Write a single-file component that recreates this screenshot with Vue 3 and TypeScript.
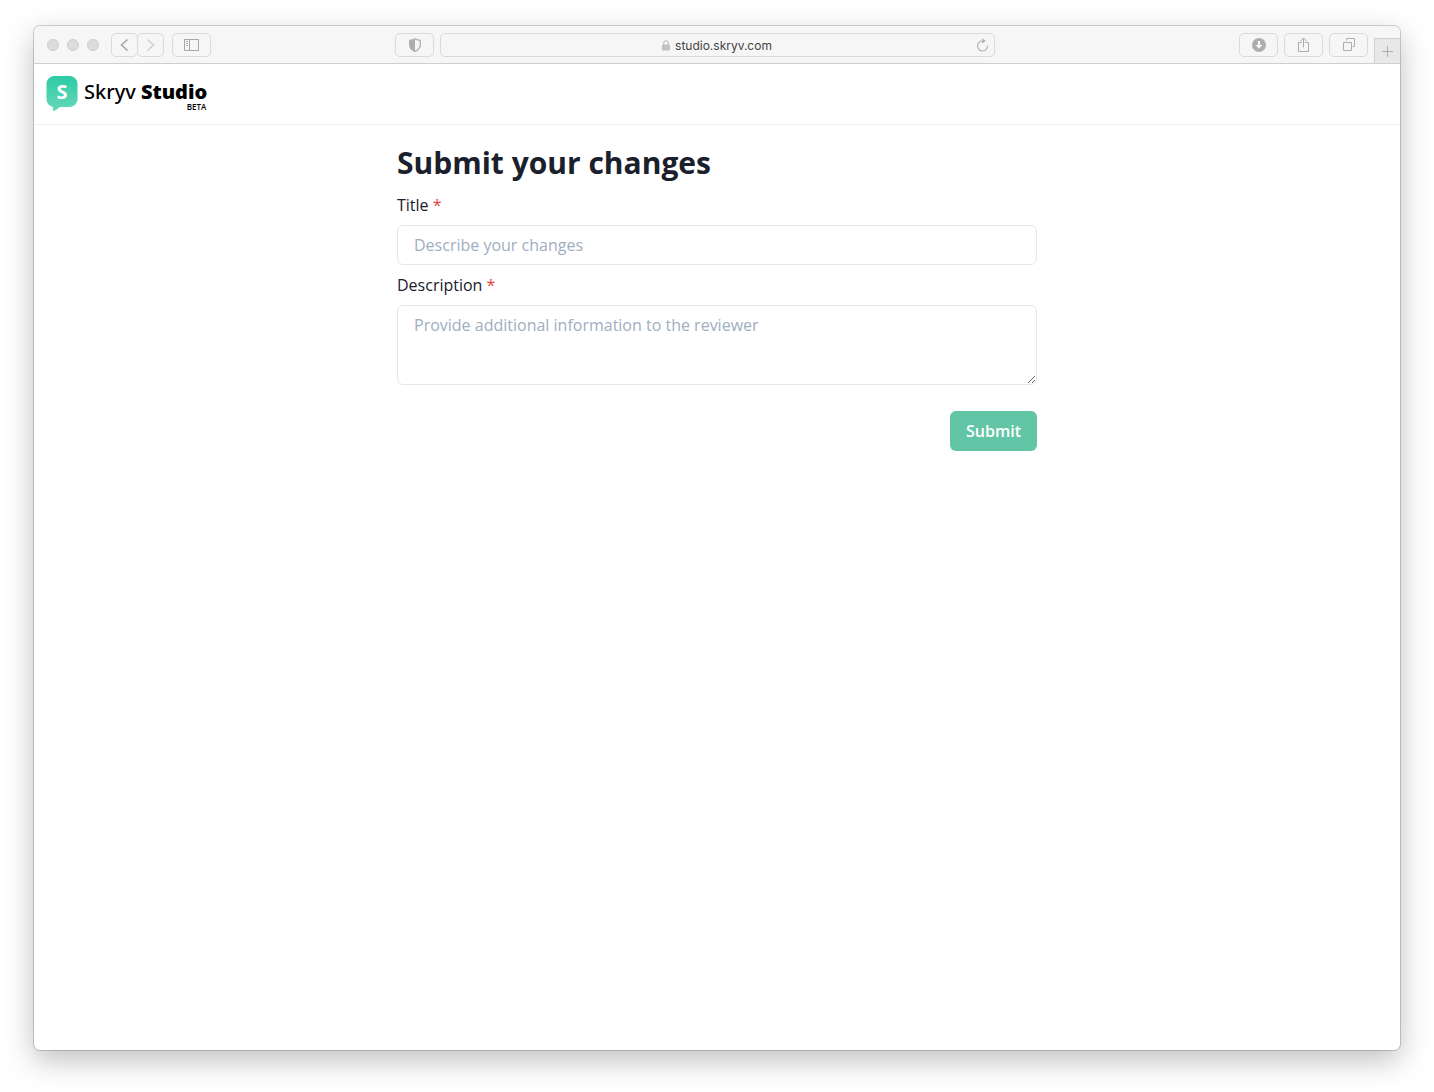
<script setup lang="ts">
import { ref } from 'vue'

const address = 'studio.skryv.com'
const title = ref('')
const description = ref('')
</script>

<template>
  <div class="desktop">
    <div class="window">
      <div class="toolbar">
        <div class="side">
          <div class="lights"><i></i><i></i><i></i></div>
          <div class="history">
            <button type="button" class="tool narrow first" aria-label="Back">
              <svg width="11" height="14" viewBox="0 0 11 14"><path d="M8.5 1.5 2.5 7l6 5.5" fill="none" stroke="#a3a3a3" stroke-width="1.5" /></svg>
            </button>
            <button type="button" class="tool narrow last" aria-label="Forward">
              <svg width="11" height="14" viewBox="0 0 11 14"><path d="M2.5 1.5 8.5 7l-6 5.5" fill="none" stroke="#cfcfcf" stroke-width="1.5" /></svg>
            </button>
          </div>
          <button type="button" class="tool" aria-label="Sidebar">
            <svg width="15" height="12" viewBox="0 0 15 12" fill="none" stroke="#a6a6a6"><path d="M.5.5h14v11H.5zM5.5.5v11M2 2.5h2M2 4.5h2M2 6.5h2" /></svg>
          </button>
          <button type="button" class="tool privacy" aria-label="Privacy report">
            <svg width="13" height="14" viewBox="-1 0 13 14"><path d="M6 .7C4.5 1.8 2.7 2.2.7 2.4v4.5C.7 10 3 12 6 13.3 9 12 11.3 10 11.3 6.9V2.4C9.3 2.2 7.5 1.8 6 .7z" fill="none" stroke="#b0b0b0" stroke-width="1.3" /><path d="M6 .7C4.5 1.8 2.7 2.2.7 2.4v4.5C.7 10 3 12 6 13.3z" fill="#adadad" /></svg>
          </button>
        </div>
        <div class="address">
          <svg width="8" height="11" viewBox="0 0 8 11"><rect y="4.5" width="8" height="6" rx=".8" fill="#c2c2c2" /><path d="M1.7 5V3a2.3 2.3 0 0 1 4.6 0v2" fill="none" stroke="#c2c2c2" stroke-width="1.1" /></svg>
          <span>{{ address }}</span>
          <button type="button" class="reload" aria-label="Reload">
            <svg width="13" height="14" viewBox="0 0 13 14"><path d="M7 3A5 5 0 1 0 11.5 7.5" fill="none" stroke="#b3b3b3" stroke-width="1.1" /><path d="M6 .3 10 3 6 5.6z" fill="#b3b3b3" /></svg>
          </button>
        </div>
        <div class="side end">
          <button type="button" class="tool" aria-label="Downloads">
            <svg width="14" height="14" viewBox="0 0 14 14"><circle cx="7" cy="7" r="7" fill="#adadad" /><path d="M5.9 3h2.2v4h2.4L7 10.8 3.5 7h2.4z" fill="#f6f6f6" /></svg>
          </button>
          <button type="button" class="tool" aria-label="Share">
            <svg width="11" height="16" viewBox="0 0 11 16" fill="none" stroke="#acacac"><path d="M4 5.5H.5v9h10v-9H7M5.5 10.5V1M2.5 4l3-3 3 3" /></svg>
          </button>
          <button type="button" class="tool" aria-label="Show tabs">
            <svg width="15" height="13" viewBox="-2 0 15 13" fill="none" stroke="#acacac"><path d="M.5 4.5h8v8h-8zM3.5 2.5v-2h8v8h-2" /></svg>
          </button>
          <button type="button" class="newtab" aria-label="New tab">
            <svg width="11" height="11" viewBox="0 0 11 11"><path d="M5.5 0v11M0 5.5h11" stroke="#adadad" /></svg>
          </button>
        </div>
      </div>

      <header class="header">
        <svg class="mark" width="32" height="36" viewBox="0 0 32 36" aria-hidden="true">
          <defs>
            <linearGradient id="mint" x1="0" y1="0" x2="0" y2="1">
              <stop offset="0" stop-color="#2ccba4" />
              <stop offset="1" stop-color="#66d8b9" />
            </linearGradient>
          </defs>
          <path d="M8.5 0h15A8 8 0 0 1 31.5 8v15a8 8 0 0 1-8 8H14l-5.6 4Q7 35.5 7 34v-3A7.5 8 0 0 1 .5 23V8a8 8 0 0 1 8-8z" fill="url(#mint)" />
          <text x="16" y="23" text-anchor="middle" class="initial">S</text>
        </svg>
        <div class="brand">
          <div class="name">Skryv <b>Studio</b></div>
          <div class="beta">BETA</div>
        </div>
      </header>

      <main class="content">
        <h1>Submit your changes</h1>
        <form @submit.prevent>
          <label for="title">Title <span class="required">*</span></label>
          <input id="title" v-model="title" type="text" placeholder="Describe your changes" />
          <label for="description">Description <span class="required">*</span></label>
          <textarea id="description" v-model="description" placeholder="Provide additional information to the reviewer"></textarea>
          <button type="submit" class="submit">Submit</button>
        </form>
      </main>
    </div>
  </div>
</template>

<style>
body {
  background: #fff;
}
</style>

<style scoped>
* {
  box-sizing: border-box;
}
.desktop {
  display: flex;
  min-height: 100vh;
  padding: 26px 34px 42px;
  font-family: "Open Sans", sans-serif;
  overflow: hidden;
}
.window {
  flex: 1;
  min-width: 0;
  border-radius: 6px;
  background: #fff;
  box-shadow: 0 0 0 1px rgba(0, 0, 0, 0.17), 0 10px 30px rgba(0, 0, 0, 0.26);
}
.toolbar {
  display: grid;
  grid-template-columns: 1fr minmax(200px, 555px) 1fr;
  height: 38px;
  border-bottom: 1px solid #cfcfcf;
  border-radius: 6px 6px 0 0;
  background: #f6f6f6;
}
.side {
  display: flex;
  align-items: center;
  padding: 0 6px 0 13px;
}
.side.end {
  justify-content: flex-end;
  gap: 6px;
  padding: 0;
}
.lights {
  display: flex;
  gap: 8px;
  margin-right: 12px;
}
.lights i {
  width: 12px;
  height: 12px;
  border: 1px solid #cdcdcd;
  border-radius: 50%;
  background: #dcdcdc;
}
.history {
  display: flex;
  margin-right: 8px;
}
.tool {
  display: flex;
  align-items: center;
  justify-content: center;
  width: 39px;
  height: 24px;
  padding: 0;
  border: 1px solid #dadada;
  border-radius: 5px;
  background: #f6f6f6;
}
.narrow {
  width: 27px;
}
.last {
  margin-left: -1px;
}
.privacy {
  margin-left: auto;
}
.address {
  display: flex;
  position: relative;
  align-items: center;
  justify-content: center;
  gap: 5px;
  align-self: center;
  height: 24px;
  padding-top: 2px;
  border: 1px solid #dadada;
  border-radius: 5px;
  color: #444;
  font: 12px/16px Inter, sans-serif;
}
.reload {
  display: flex;
  position: absolute;
  top: 4px;
  right: 5px;
  padding: 0;
  border: 0;
  background: none;
}
.newtab {
  display: flex;
  align-items: center;
  justify-content: center;
  align-self: flex-end;
  width: 26px;
  height: 25px;
  padding: 0;
  border: 1px solid #cfcfcf;
  border-width: 1px 0 0 1px;
  background: #e8e8e8;
}
.header {
  display: flex;
  gap: 6px;
  height: 61px;
  padding: 12px;
  border-bottom: 1px solid #edf0f4;
  color: #000;
}
.mark {
  flex: none;
}
.initial {
  fill: #fff;
  font-size: 20px;
  font-weight: 700;
}
.brand {
  padding-top: 5px;
  text-align: right;
}
.name {
  font-family: "Noto Sans", "Open Sans", sans-serif;
  font-size: 20px;
  font-weight: 500;
  line-height: 22px;
}
.name b {
  font-family: "Open Sans", sans-serif;
  font-weight: 800;
}
.beta {
  padding-right: 1px;
  font-size: 8px;
  font-weight: 600;
  line-height: 8px;
}
.content {
  max-width: 640px;
  margin: 0 auto;
  padding: 20px 0;
  color: #1a202c;
}
h1 {
  margin: 0 0 12px;
  font-size: 30px;
  font-weight: 700;
  line-height: 36px;
}
form {
  display: flex;
  flex-direction: column;
  gap: 8px;
  font-size: 16px;
  line-height: 24px;
}
.required {
  color: #e53e3e;
}
input,
textarea {
  width: 100%;
  height: 40px;
  margin: 0;
  padding: 7px 16px;
  border: 1px solid #e2e8f0;
  border-radius: 6px;
  background: #fff;
  color: inherit;
  font: inherit;
}
textarea {
  height: 80px;
  resize: vertical;
}
input::placeholder,
textarea::placeholder {
  color: #a0aec0;
  opacity: 1;
}
.submit {
  align-self: flex-end;
  height: 40px;
  margin-top: 18px;
  padding: 0 16px;
  border: 0;
  border-radius: 6px;
  background: #62c6a6;
  color: #fff;
  font: inherit;
  font-weight: 600;
}
</style>
